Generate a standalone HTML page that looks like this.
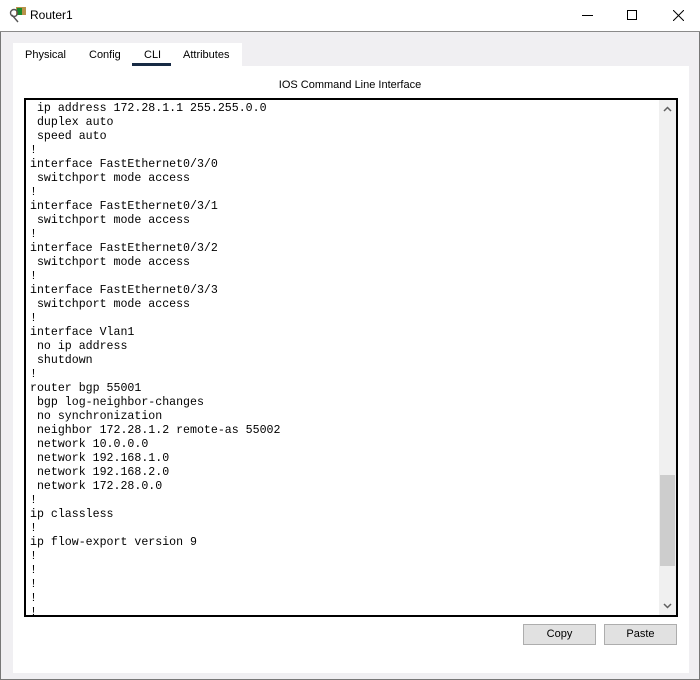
<!DOCTYPE html>
<html><head><style>
*{margin:0;padding:0;box-sizing:border-box}
body{width:700px;height:680px;background:#f0eff2;position:relative;overflow:hidden;font-family:"Liberation Sans",sans-serif}
.win{position:absolute;left:0;top:0;width:700px;height:680px;border:1px solid #777;border-top:1px solid #333}
.title{position:absolute;left:0;top:0;width:700px;height:32px;background:#fff;border-bottom:1px solid #8a8a8a}
.title .t{position:absolute;left:30px;top:8px;font-size:12px;color:#000}
.tabs{position:absolute;left:13px;top:43px;width:229px;height:24px;background:#fff}
.tab{position:absolute;top:6px;font-size:11px;color:#000}
.panel{position:absolute;left:13px;top:66px;width:676px;height:607px;background:#fff}
.hdr{position:absolute;left:0;width:700px;top:79px;text-align:center;font-size:11px;padding-left:0}
.cli{position:absolute;left:24px;top:98px;width:654px;height:519px;border:2px solid #000;background:#fff;overflow:hidden}
pre{position:absolute;left:4px;top:2px;font-family:"Liberation Mono",monospace;font-size:11.6px;line-height:14px;color:#000}
.sb{position:absolute;right:0;top:0;width:17px;height:515px;background:#f0f0f0}
.thumb{position:absolute;left:1px;top:375px;width:15px;height:91px;background:#cdcdcd}
.btn{position:absolute;top:624px;width:73px;height:21px;background:#e1e1e1;border:1px solid #adadad;font-size:11px;text-align:center;line-height:19px}
</style></head><body>
<div class="win"></div>
<div class="title">
<svg style="position:absolute;left:8px;top:5px" width="20" height="20" viewBox="0 0 20 20"><rect x="8" y="2" width="10" height="8" fill="#b8924a"/><rect x="9" y="3" width="5" height="7" fill="#1a8a2a"/><circle cx="6" cy="8" r="3.5" fill="none" stroke="#555" stroke-width="1.4"/><path d="M4 10 L10 17" stroke="#555" stroke-width="1.4"/></svg>
<span class="t">Router1</span>
<div style="position:absolute;left:582px;top:15px;width:11px;height:1px;background:#000"></div>
<div style="position:absolute;left:627px;top:10px;width:10px;height:10px;border:1px solid #000"></div>
<svg style="position:absolute;left:673px;top:10px" width="11" height="11"><path d="M0 0L11 11M11 0L0 11" stroke="#000" stroke-width="1"/></svg>
</div>
<div class="tabs">
<span class="tab" style="left:12px">Physical</span>
<span class="tab" style="left:76px">Config</span>
<span class="tab" style="left:131px">CLI</span>
<span class="tab" style="left:170px">Attributes</span>
<div style="position:absolute;left:119px;top:20px;width:39px;height:4px;background:#172a44"></div>
</div>
<div class="panel"></div>
<div class="hdr">IOS Command Line Interface</div>
<div class="cli">
<pre> ip address 172.28.1.1 255.255.0.0
 duplex auto
 speed auto
!
interface FastEthernet0/3/0
 switchport mode access
!
interface FastEthernet0/3/1
 switchport mode access
!
interface FastEthernet0/3/2
 switchport mode access
!
interface FastEthernet0/3/3
 switchport mode access
!
interface Vlan1
 no ip address
 shutdown
!
router bgp 55001
 bgp log-neighbor-changes
 no synchronization
 neighbor 172.28.1.2 remote-as 55002
 network 10.0.0.0
 network 192.168.1.0
 network 192.168.2.0
 network 172.28.0.0
!
ip classless
!
ip flow-export version 9
!
!
!
!
!</pre>
<div class="sb"><div class="thumb"></div>
<svg style="position:absolute;left:4px;top:6px" width="9" height="6"><path d="M1 5L4.5 1.5L8 5" stroke="#606060" stroke-width="1.5" fill="none"/></svg>
<svg style="position:absolute;left:4px;top:503px" width="9" height="6"><path d="M1 1L4.5 4.5L8 1" stroke="#606060" stroke-width="1.5" fill="none"/></svg>
</div>
</div>
<div class="btn" style="left:523px">Copy</div>
<div class="btn" style="left:604px">Paste</div>
</body></html>
